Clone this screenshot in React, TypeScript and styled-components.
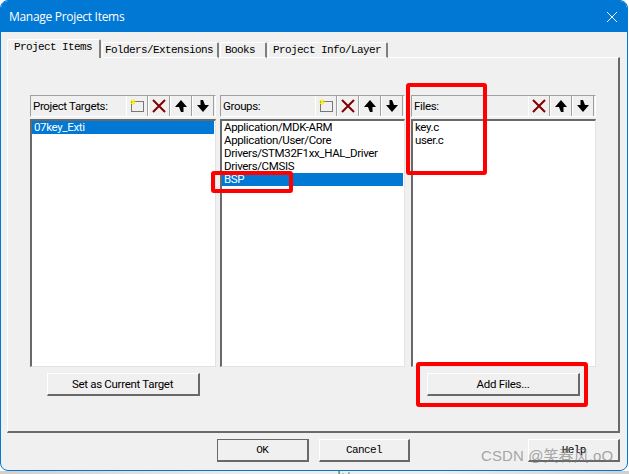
import styled, { createGlobalStyle } from 'styled-components';

const GlobalStyle = createGlobalStyle`
  html, body {
    margin: 0;
    padding: 0;
    background: #ffffff;
    overflow: hidden;
  }
  * { box-sizing: border-box; }
`;

const Page = styled.div`
  position: relative;
  width: 629px;
  height: 474px;
  display: flex;
  flex-direction: column;
  font-family: 'Liberation Sans', Arial, sans-serif;
`;

const Window = styled.div`
  width: 628px;
  height: 471px;
  display: flex;
  flex-direction: column;
  background: #f0f0f0;
  border: 1px solid #0078d4;
  border-radius: 8px;
  overflow: hidden;
`;

const Shadow = styled.div`
  flex: 1;
  overflow: hidden;
  padding-left: 333px;
  background: linear-gradient(90deg, #cfcfcf, #ececec 40%, #ececec 70%, #cfcfcf);
  color: #0b6b1f;
  font-family: 'Noto Sans CJK SC', sans-serif;
  font-size: 12px;
  line-height: 12px;
`;

const TitleBar = styled.div`
  height: 31px;
  display: flex;
  align-items: center;
  justify-content: space-between;
  padding: 0 9px 0 8px;
  background: #0078d4;
  color: #ffffff;
  font-family: 'Open Sans', 'Noto Sans', sans-serif;
  font-size: 12px;
  letter-spacing: -0.3px;
`;

const Body = styled.div`
  flex: 1;
  display: flex;
  flex-direction: column;
  padding: 7px 7px 0 6px;
`;

const TabRow = styled.div`
  height: 19px;
  display: flex;
  align-items: flex-end;
  position: relative;
  z-index: 1;
  margin-bottom: -1px;
`;

const Tab = styled.div<{ $active?: boolean; $width: number; $pad: number }>`
  width: ${(p) => p.$width}px;
  height: ${(p) => (p.$active ? 19 : 16)}px;
  margin-right: 1px;
  padding-left: ${(p) => p.$pad}px;
  background: #f0f0f0;
  border-top: 1px solid #ffffff;
  border-left: 1px solid #ffffff;
  border-right: 2px solid #808080;
  border-top-left-radius: 2px;
  border-top-right-radius: 2px;
  border-bottom: ${(p) => (p.$active ? 'none' : '1px solid #ffffff')};
  color: #000000;
  font-family: 'Liberation Mono', 'DejaVu Sans Mono', monospace;
  font-size: 11px;
  letter-spacing: -0.6px;
  line-height: 14px;
  white-space: nowrap;
`;

const Panel = styled.div`
  height: 376px;
  padding: 37px 0 0 22px;
  border-top: 1px solid #ffffff;
  border-left: 1px solid #ffffff;
  border-right: 2px solid #696969;
  border-bottom: 2px solid #696969;
`;

const ColumnGrid = styled.div`
  display: grid;
  grid-template-columns: 186px 189px 191px;
  grid-template-rows: 22px 250px 29px;
`;

const HeaderStrip = styled.div<{ $left?: number }>`
  margin-left: ${(p) => p.$left ?? 0}px;
  display: flex;
  align-items: center;
  justify-content: space-between;
  padding-left: 2px;
  border-top: 1px solid #a0a0a0;
  border-left: 1px solid #a0a0a0;
  border-bottom: 1px solid #ffffff;
  border-right: 1px solid #ffffff;
  font-family: 'Roboto', 'Liberation Sans', sans-serif;
  font-size: 11.5px;
  letter-spacing: -0.35px;
  color: #000000;
`;

const IconGroup = styled.div`
  display: flex;
  height: 100%;
  padding-right: 1px;
`;

const IconButton = styled.div`
  width: 22px;
  height: 20px;
  display: flex;
  align-items: center;
  justify-content: center;
  border-left: 1px solid #ffffff;
  border-right: 1px solid #a0a0a0;
`;

const ListBox = styled.div<{ $left?: number }>`
  margin-left: ${(p) => p.$left ?? 0}px;
  margin-top: 2px;
  padding-right: 1px;
  background: #ffffff;
  border-top: 2px solid #696969;
  border-left: 2px solid #696969;
  border-right: 1px solid #e3e3e3;
  border-bottom: 1px solid #e3e3e3;
`;

const ListRow = styled.div<{ $selected?: boolean }>`
  height: 13px;
  padding-left: 2px;
  background: ${(p) => (p.$selected ? '#0078d4' : 'transparent')};
  color: ${(p) => (p.$selected ? '#ffffff' : '#000000')};
  font-family: 'Roboto', 'Liberation Sans', sans-serif;
  font-size: 11.5px;
  letter-spacing: -0.35px;
  line-height: 13px;
  white-space: nowrap;
`;

const ButtonCell = styled.div<{ $left?: number }>`
  margin-left: ${(p) => p.$left ?? 0}px;
  margin-top: 6px;
  height: 23px;
  display: flex;
  justify-content: center;
`;

const FlatButton = styled.div`
  width: 153px;
  height: 23px;
  display: flex;
  align-items: center;
  justify-content: center;
  border-top: 1px solid #ffffff;
  border-left: 1px solid #ffffff;
  border-right: 2px solid #696969;
  border-bottom: 2px solid #696969;
  font-family: 'Roboto', 'Liberation Sans', sans-serif;
  font-size: 11.5px;
  letter-spacing: -0.3px;
  color: #000000;
`;

const Footer = styled.div`
  display: flex;
  padding-top: 6px;
  padding-left: 210px;
`;

const FooterButton = styled.div<{ $default?: boolean; $gap: number }>`
  width: 92px;
  height: 23px;
  margin-right: ${(p) => p.$gap}px;
  display: flex;
  align-items: center;
  justify-content: center;
  border-top: 1px solid ${(p) => (p.$default ? '#696969' : '#ffffff')};
  border-left: 1px solid ${(p) => (p.$default ? '#696969' : '#ffffff')};
  border-right: 2px solid #696969;
  border-bottom: 2px solid #696969;
  font-family: 'Liberation Mono', 'DejaVu Sans Mono', monospace;
  font-size: 11px;
  letter-spacing: -0.6px;
  color: #000000;
`;

const Highlight = styled.div<{ $x: number; $y: number; $w: number; $h: number }>`
  position: absolute;
  left: ${(p) => p.$x}px;
  top: ${(p) => p.$y}px;
  width: ${(p) => p.$w}px;
  height: ${(p) => p.$h}px;
  border: 4px solid #ff0000;
  border-radius: 3px;
`;

const Watermark = styled.div`
  position: absolute;
  left: 481px;
  top: 446px;
  color: rgba(120, 120, 120, 0.65);
  font-family: 'Liberation Sans', 'Noto Sans CJK SC', sans-serif;
  font-size: 15px;
  line-height: 20px;
  letter-spacing: 0.1px;
  white-space: nowrap;
`;

const NewIcon = () => (
  <svg width="16" height="16" viewBox="0 0 16 16">
    <rect x="2.5" y="3.5" width="12" height="10" fill="none" stroke="#000" strokeDasharray="1 1" />
    <path d="M4 1v6M1 4h6M2 2l4 4M6 2L2 6" stroke="#f6f000" strokeWidth="1" />
  </svg>
);

const CrossIcon = () => (
  <svg width="16" height="16" viewBox="0 0 16 16">
    <path d="M2 2l12 12M14 2L2 14" stroke="#800000" strokeWidth="2" />
  </svg>
);

const UpIcon = () => (
  <svg width="14" height="14" viewBox="0 0 14 14">
    <path d="M7 1L13 8H9.5V13H7C6 11 5.5 9 5 8H1z" fill="#000" />
  </svg>
);

const DownIcon = () => (
  <svg width="14" height="14" viewBox="0 0 14 14">
    <path d="M7 13L1 6H4.5V1H7C8 3 8.5 5 9 6H13z" fill="#000" />
  </svg>
);

const CloseIcon = () => (
  <svg width="12" height="12" viewBox="0 0 12 12">
    <path d="M1 1l10 10M11 1L1 11" stroke="#fff" strokeWidth="1" />
  </svg>
);

const Tools = ({ withNew }: { withNew?: boolean }) => (
  <IconGroup>
    {withNew && (
      <IconButton>
        <NewIcon />
      </IconButton>
    )}
    <IconButton>
      <CrossIcon />
    </IconButton>
    <IconButton>
      <UpIcon />
    </IconButton>
    <IconButton>
      <DownIcon />
    </IconButton>
  </IconGroup>
);

const groups = ['Application/MDK-ARM', 'Application/User/Core', 'Drivers/STM32F1xx_HAL_Driver', 'Drivers/CMSIS', 'BSP'];

export default function App() {
  return (
    <Page>
      <GlobalStyle />
      <Window>
        <TitleBar>
          Manage Project Items
          <CloseIcon />
        </TitleBar>
        <Body>
          <TabRow>
            <Tab $active $width={94} $pad={6}>Project Items</Tab>
            <Tab $width={117} $pad={2}>Folders/Extensions</Tab>
            <Tab $width={47} $pad={4}>Books</Tab>
            <Tab $width={120} $pad={4}>Project Info/Layer</Tab>
          </TabRow>
          <Panel>
            <ColumnGrid>
              <HeaderStrip>
                Project Targets:
                <Tools withNew />
              </HeaderStrip>
              <HeaderStrip $left={4}>
                Groups:
                <Tools withNew />
              </HeaderStrip>
              <HeaderStrip $left={6}>
                Files:
                <Tools />
              </HeaderStrip>
              <ListBox>
                <ListRow $selected>07key_Exti</ListRow>
              </ListBox>
              <ListBox $left={4}>
                {groups.map((g) => (
                  <ListRow key={g} $selected={g === 'BSP'}>{g}</ListRow>
                ))}
              </ListBox>
              <ListBox $left={6}>
                <ListRow>key.c</ListRow>
                <ListRow>user.c</ListRow>
              </ListBox>
              <ButtonCell>
                <FlatButton>Set as Current Target</FlatButton>
              </ButtonCell>
              <div />
              <ButtonCell $left={6}>
                <FlatButton>Add Files...</FlatButton>
              </ButtonCell>
            </ColumnGrid>
          </Panel>
          <Footer>
            <FooterButton $default $gap={10}>OK</FooterButton>
            <FooterButton $gap={118}>Cancel</FooterButton>
            <FooterButton $gap={0}>Help</FooterButton>
          </Footer>
        </Body>
      </Window>
      <Shadow>水/</Shadow>
      <Highlight $x={211} $y={171} $w={82} $h={22} />
      <Highlight $x={406} $y={83} $w={81} $h={92} />
      <Highlight $x={416} $y={362} $w={172} $h={45} />
      <Watermark>CSDN @笑春风.oO</Watermark>
    </Page>
  );
}
